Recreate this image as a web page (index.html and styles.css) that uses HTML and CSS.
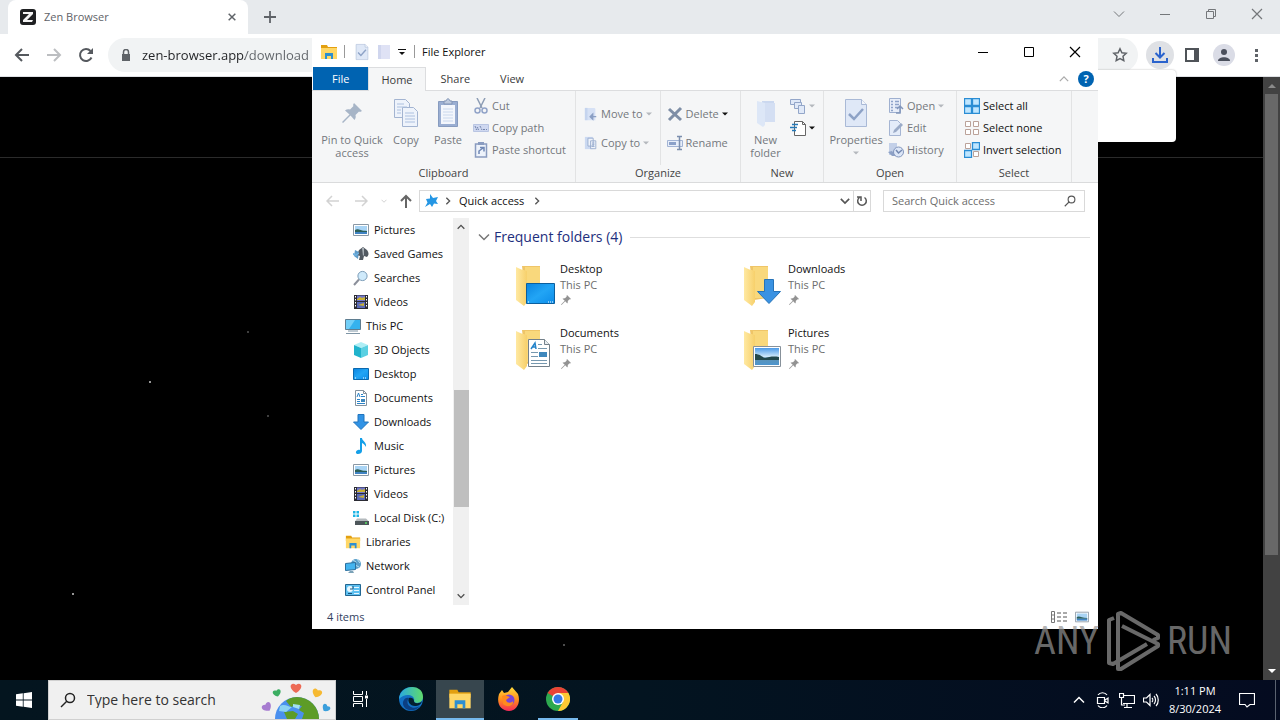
FILE: index.html
```html
<!DOCTYPE html>
<html lang="en">
<head>
<meta charset="utf-8">
<title>Desktop</title>
<link rel="stylesheet" href="styles.css">
</head>
<body>
<svg class="defs" aria-hidden="true">
  <defs>
    <linearGradient id="fold" x1="0" y1="0" x2="1" y2="0"><stop offset="0" stop-color="#ffe9a2"/><stop offset="1" stop-color="#f7d06b"/></linearGradient>
    <linearGradient id="blue" x1="0" y1="0" x2="1" y2="1"><stop offset="0" stop-color="#0a84e0"/><stop offset=".5" stop-color="#22a5f5"/><stop offset="1" stop-color="#0c8ce9"/></linearGradient>
    <linearGradient id="edgeg" x1="0" y1="0" x2="1" y2="0"><stop offset="0" stop-color="#2aa9e0"/><stop offset="1" stop-color="#5fdb6c"/></linearGradient>
    <linearGradient id="foxg" x1="0" y1="0" x2="0" y2="1"><stop offset="0" stop-color="#ffdc3a"/><stop offset=".55" stop-color="#ff8a1e"/><stop offset="1" stop-color="#f5285a"/></linearGradient>
    <linearGradient id="sky" x1="0" y1="0" x2="0" y2="1"><stop offset="0" stop-color="#4b9ae8"/><stop offset=".5" stop-color="#cfe8fa"/><stop offset=".6" stop-color="#5e93b4"/><stop offset="1" stop-color="#4d95cf"/></linearGradient>
  </defs>
  <symbol id="i-arrow-left" viewBox="0 0 16 16"><path d="M15 8H2M8 2L2 8l6 6" fill="none" stroke="currentColor" stroke-width="2"/></symbol>
  <symbol id="i-chev-down" viewBox="0 0 12 12"><path d="M1 3.500l5 5 5-5" fill="none" stroke="currentColor" stroke-width="1.500"/></symbol>
  <symbol id="i-chev-thick" viewBox="0 0 12 12"><path d="M1 3.500l5 5 5-5" fill="none" stroke="currentColor" stroke-width="2"/></symbol>
  <symbol id="i-tri" viewBox="0 0 6 6"><path d="M0 1.500h6l-3 3z" fill="currentColor"/></symbol>
  <symbol id="i-x" viewBox="0 0 12 12"><path d="M1 1l10 10M11 1L1 11" fill="none" stroke="currentColor" stroke-width="1.200"/></symbol>
  <symbol id="i-min" viewBox="0 0 12 12"><path d="M1 6.500h10" stroke="currentColor"/></symbol>
  <symbol id="i-pin" viewBox="0 0 24 24"><path d="M14 2l8 8-2 1-1-.5-3.500 3.500c.5 2 .2 3.500-1 5l-4-4.500L3 22l-1-1 7.500-7.500L5 9.500c1.500-1.200 3-1.500 5-1l3.500-3.500-.5-1z" fill="currentColor"/></symbol>
  <symbol id="i-explorer" viewBox="0 0 18 16"><path d="M1 1h6l1 2h9v4H1z" fill="#e3a010"/><path d="M1 4h16v11H1z" fill="#ffd766"/><path d="M5 15V9h8v6h-2v-3H7v3z" fill="#2d8fd0"/></symbol>
  <symbol id="i-picture" viewBox="0 0 16 16"><path d="M.5 2.500h15v11H.5z" fill="#fff" stroke="#8a98a5"/><path d="M2 4h12v8H2z" fill="#a9d4f5"/><path d="M2 8c3-2 5 1 12 1v1H2z" fill="#2c5f58"/><path d="M2 10h12v2H2z" fill="#3f83c4"/></symbol>
  <symbol id="i-games" viewBox="0 0 16 16"><path d="M2 4l4 2-1 7-4-3z" fill="#5e9bc9"/><path d="M6 4l4-3 4 3c2 3 2 5 0 7l-3-1-1 4H6l1-4-3-1z" fill="#525a62"/><path d="M9 2l1 8 1-1V2z" fill="#a8b0b6"/><path d="M0 7l3 1 3-2v2l-3 2-3-1z" fill="#6fb0df"/></symbol>
  <symbol id="i-search" viewBox="0 0 16 16"><path d="M1 15l5-5.500" stroke="#8b8f9a" stroke-width="2"/><circle cx="9.500" cy="6" r="4.600" fill="#cfeafb" stroke="#7c9db8"/></symbol>
  <symbol id="i-video" viewBox="0 0 16 16"><path d="M1 1h14v14H1z" fill="#2b2b33"/><path d="M4 1.500h8V7H4z" fill="#7177c9"/><path d="M4 8h8v6H4z" fill="#5969b8"/><path d="M4 5l3-2 2 1 3-1v3H4zM5 11l6-2v3z" fill="#c9b233"/><path d="M2.500 2v12M13.500 2v12" stroke="#fff" stroke-dasharray="1.500 1.500"/></symbol>
  <symbol id="i-pc" viewBox="0 0 16 16"><path d="M.5 1.500h15v10H.5z" fill="#35b2ee" stroke="#5f7d90"/><path d="M1 2h9l-6 9H1z" fill="#72cff8"/><path d="M3 13h10M1 15.500h14" stroke="#7f95a5"/></symbol>
  <symbol id="i-cube" viewBox="0 0 16 16"><path d="M8 0l7 3-7 3-7-3z" fill="#aeeef5"/><path d="M1 3l7 3v10l-7-3z" fill="#20b3cc"/><path d="M15 3L8 6v10l7-3z" fill="#5ad0e2"/></symbol>
  <symbol id="i-desktop" viewBox="0 0 16 16"><path d="M.5 2.500h15v11H.5z" fill="url(#blue)" stroke="#0b68ae"/><path d="M2 12h1M10 12h4" stroke="#fff" stroke-dasharray="1 1"/></symbol>
  <symbol id="i-doc" viewBox="0 0 16 16"><path d="M2.500.5h8l3 3v12h-11z" fill="#fff" stroke="#84929e"/><path d="M10.500.5v3h3" fill="none" stroke="#84929e"/><path d="M4 7l1.500-4L7 7M8 4.500h2M8 6.500h4M4 9.500h3M4 11.500h3M4 13.500h8" fill="none" stroke="#2a83c8"/><path d="M8 9h4v3H8z" fill="#3f88bd"/></symbol>
  <symbol id="i-down" viewBox="0 0 16 16"><path d="M5 .5h6V8h4.500L8 15.500.5 8H5z" fill="#3193e5" stroke="#2174bd"/></symbol>
  <symbol id="i-music" viewBox="0 0 16 16"><path d="M7 0h2c0 3 5 4 4 9-1-2-2-3-4-4v8c0 2-2 3-4 3s-3-2-1-3.500c1-1 2-1 3-.5z" fill="#149fe8"/></symbol>
  <symbol id="i-disk" viewBox="0 0 16 16"><path d="M0 1h2.500v2.500H0zM3.500 1H6v2.500H3.500zM0 4.500h2.500V7H0zM3.500 4.500H6V7H3.500z" fill="#1cb4e4"/><path d="M4 8.500h9l3 3H2z" fill="#b4babd"/><path d="M2 11h14v4H2z" fill="#4d565a"/><path d="M12 13h2" stroke="#57e065" stroke-width="1.500"/></symbol>
  <symbol id="i-network" viewBox="0 0 16 16"><circle cx="11" cy="6" r="5" fill="#5a9fca"/><path d="M8 2l3 2-1 3 4 2M12 1l3 4" fill="none" stroke="#b7dff0"/><path d="M.5 5.500l10-1v7l-10 1z" fill="#43b4ef" stroke="#2a6f9e"/><path d="M3 15h6l-1-2H5z" fill="#7ca2b7"/></symbol>
  <symbol id="i-panel" viewBox="0 0 16 16"><path d="M.5 2.500h15v11H.5z" fill="#5cbff0" stroke="#236691"/><circle cx="5" cy="7" r="3" fill="#e9f8ff"/><path d="M5 7h3V4M3 11.500h4" stroke="#18547c" fill="none"/><path d="M9 5.500h5M9 8.500h5M9 11.500h5" stroke="#e6f6ff" fill="none"/></symbol>
  <symbol id="i-folder-big" viewBox="0 0 44 44"><path d="M9 3h18v32l-14 2z" fill="#efc568"/><path d="M12 4h15v31H12z" fill="#f9d87c"/><path d="M3 4c3 2 8 3 11 4v31l-3 4-8-6z" fill="url(#fold)"/></symbol>
  <symbol id="i-check-doc" viewBox="0 0 24 32"><path d="M1.500 2.500h16l5 5v22h-21z" fill="#dfe8f7" stroke="#a9b9d6"/><path d="M17.500 2.500v5h5" fill="#f4f7fc" stroke="#a9b9d6"/><path d="M5 17l5 5 9-10" fill="none" stroke="#8da2c6" stroke-width="2.500"/></symbol>
  <symbol id="i-copy" viewBox="0 0 26 30"><g fill="#eef3fb" stroke="#a3b4d1"><path d="M1.500 1.500h11l4 4v14h-15z"/><path d="M9.500 9.500h11l4 4v15h-15z"/></g><path d="M4 6h7M4 9h10M4 12h4M4 15h4M12 15h9M12 18h10M12 21h10M12 24h10" stroke="#acc0df"/></symbol>
  <symbol id="i-paste" viewBox="0 0 24 30"><path d="M2.500 3.500h19v25h-19z" fill="#9aaed2" stroke="#879bbf"/><path d="M5 7h14v19H5z" fill="#f3f6fc"/><path d="M8 6V3h2c1-3 3-3 4 0h2v3z" fill="#bdc9de" stroke="#8194b5"/><path d="M7 11h10M7 14h10M7 17h10M7 20h10M7 23h10" stroke="#cad8ed"/></symbol>
  <symbol id="i-cut" viewBox="0 0 16 16"><path d="M4 0l5 10M12 0L7 10" stroke="#8d9db5" stroke-width="1.500"/><circle cx="4.500" cy="12.500" r="2.500" fill="none" stroke="#91a3c8" stroke-width="1.500"/><circle cx="11.500" cy="12.500" r="2.500" fill="none" stroke="#91a3c8" stroke-width="1.500"/></symbol>
  <symbol id="i-path" viewBox="0 0 16 16"><path d="M.5 4.500h15v7H.5z" fill="#cfd8f0" stroke="#b9c5e2"/><path d="M2 6l1.500 4 1-3 1 3M7 6l2 4M10 9.500h4" stroke="#7385ad" fill="none" stroke-dasharray="2 1"/></symbol>
  <symbol id="i-shortcut" viewBox="0 0 16 16"><path d="M2.500 2h11v13h-11z" fill="#eef3fb" stroke="#8a9cc0" stroke-width="1.500"/><path d="M5 0h6v3H5z" fill="#8a9cc0"/><path d="M6 12V9l4-3M7 5.500h4v4" stroke="#7088b5" stroke-width="1.500" fill="none"/></symbol>
  <symbol id="i-move" viewBox="0 0 16 16"><path d="M1 1h11l1 1v13H1z" fill="#d6e1f5"/><path d="M1 1h3v14H1z" fill="#c5d4ee"/><path d="M14 11H8M10 8l-3 3 3 3z" stroke="#8b9fc4" stroke-width="1.500" fill="#8b9fc4"/></symbol>
  <symbol id="i-copyto" viewBox="0 0 16 16"><path d="M1 1h9v14H1z" fill="#cbd9f1"/><path d="M4.500 2.500h6v9h-6zM7.500 5.500h6v9h-6z" fill="#eef3fb" stroke="#98abce"/><path d="M9 8h3M9 10h3M9 12h3" stroke="#98abce"/></symbol>
  <symbol id="i-delete" viewBox="0 0 16 16"><path d="M2 3l12 11M14 2L2 14" stroke="#7e8ea6" stroke-width="3"/></symbol>
  <symbol id="i-rename" viewBox="0 0 16 16"><path d="M.5 5.500h15v6H.5z" fill="#e7eefa" stroke="#a2b4d5"/><path d="M2 7h7v3H2z" fill="#8ba1c9"/><path d="M10 1.500h5M12.500 1v14M10 14.500h5" stroke="#7c8fae" stroke-width="1.500"/></symbol>
  <symbol id="i-newfolder" viewBox="0 0 20 30"><path d="M6 3h12v21H6z" fill="#cbd8ef"/><path d="M1 3l8 2v22l-2 2-6-4z" fill="#dde7f7"/><path d="M9 5h10v19H9z" fill="#d4dff3"/></symbol>
  <symbol id="i-newitem" viewBox="0 0 16 16"><g fill="#e0e9f8" stroke="#93a6c9"><path d="M.5 1.500h10v5H.5z"/><path d="M4.500 4.500h7v6h-7z"/><path d="M8.500 7.500h6v8h-6z"/></g></symbol>
  <symbol id="i-easy" viewBox="0 0 16 16"><path d="M4.500 1.500h8l3 3v11h-11z" fill="#fff" stroke="#666"/><path d="M12.500 1.500v3h3" fill="none" stroke="#666"/><path d="M2 4.500h6M0 7.500h7M2 10.500h4" stroke="#2479b8" stroke-width="1.500"/></symbol>
  <symbol id="i-openi" viewBox="0 0 16 16"><path d="M1.500.5h11v14h-11z" fill="#e8eef9" stroke="#9fb0d0"/><path d="M3 3.500h2M3 6.500h2M3 9.500h2M3 12.500h2M7 3.500h4M7 6.500h4M7 9.500h3" stroke="#8fa4ca" stroke-width="1.500"/><path d="M8 15h4V9M9 11l3-3 3 3" stroke="#8296bb" stroke-width="1.500" fill="none"/></symbol>
  <symbol id="i-edit" viewBox="0 0 16 16"><path d="M1.500.5h8l3 3v12h-11z" fill="#e4ecf9" stroke="#a5b5d3"/><path d="M5 13l1-3 7-7 2 2-7 7z" fill="#9babc8"/></symbol>
  <symbol id="i-history" viewBox="0 0 16 16"><path d="M1 1h8v12H1z" fill="#c3d0e8"/><path d="M0 10l4 4h4l-4-5z" fill="#8da1c6"/><circle cx="10.500" cy="10" r="5" fill="#dce6f7" stroke="#8094bb"/><path d="M8 8l2.500 3L14 8" fill="none" stroke="#7388b0" stroke-width="1.500"/></symbol>
  <symbol id="i-selall" viewBox="0 0 16 16"><path d="M.5.5h7v7h-7zM8.500.5h7v7h-7zM.5 8.500h7v7h-7zM8.500 8.500h7v7h-7z" fill="#bfe6ff" stroke="#2a8dd4" stroke-width="1.300"/></symbol>
  <symbol id="i-selnone" viewBox="0 0 16 16"><path d="M1.500 1.500h5v5h-5zM9.500 1.500h5v5h-5zM1.500 9.500h5v5h-5zM9.500 9.500h5v5h-5z" fill="#fff" stroke="#bba299"/></symbol>
  <symbol id="i-selinv" viewBox="0 0 16 16"><path d="M1.500 1.500h5v5h-5zM9.500 9.500h5v5h-5z" fill="#fff" stroke="#bba299"/><path d="M8.500.5h7v7h-7zM.5 8.500h7v7h-7z" fill="#bfe6ff" stroke="#2a8dd4" stroke-width="1.300"/></symbol>
  <symbol id="i-lens" viewBox="0 0 16 16"><circle cx="10" cy="6" r="4.500" fill="none" stroke="currentColor" stroke-width="1.500"/><path d="M7 9l-6 6" stroke="currentColor" stroke-width="1.500"/></symbol>
</svg>

<div class="desktop">
  <main class="browser">
    <header class="tabstrip">
      <div class="tab">
        <svg class="s16" viewBox="0 0 16 16"><rect width="16" height="16" rx="3" fill="#1f2022"/><path d="M3 3h10v2L7 11h6l-1 2H3v-2l6-6H3z" fill="#f4f4f4"/></svg>
        <span class="tab-title">Zen Browser</span>
        <button class="ib s16" aria-label="Close tab"><svg class="s8" viewBox="0 0 12 12"><path d="M1 1l10 10M11 1L1 11" stroke="currentColor" stroke-width="2.200"/></svg></button>
      </div>
      <button class="ib newtab" aria-label="New tab"><svg class="s12" viewBox="0 0 12 12"><path d="M6 0v12M0 6h12" stroke="currentColor" stroke-width="1.800"/></svg></button>
      <div class="chrome-controls">
        <button class="ib" aria-label="Search tabs"><svg class="s12" viewBox="0 0 12 12"><path d="M1 3.500l5 5 5-5" fill="none" stroke="currentColor"/></svg></button>
        <button class="ib" aria-label="Minimize"><svg class="s12"><use href="#i-min"/></svg></button>
        <button class="ib" aria-label="Restore"><svg class="s12" viewBox="0 0 12 12"><path d="M1.500 3.500h7v7h-7zM3.500 3V1.500h7v7H9" fill="none" stroke="currentColor"/></svg></button>
        <button class="ib" aria-label="Close"><svg class="s12"><use href="#i-x"/></svg></button>
      </div>
    </header>
    <div class="toolbar">
      <button class="ib nav" aria-label="Back"><svg class="s16"><use href="#i-arrow-left"/></svg></button>
      <button class="ib nav dim" aria-label="Forward"><svg class="s16 flip"><use href="#i-arrow-left"/></svg></button>
      <button class="ib nav" aria-label="Reload"><svg class="s16" viewBox="0 0 16 16"><path d="M13.500 10.500A6 6 0 1 1 12.500 4" fill="none" stroke="currentColor" stroke-width="2"/><path d="M15 1v6H9z" fill="currentColor"/></svg></button>
      <label class="omnibox">
        <svg class="s12" viewBox="0 0 12 12"><path d="M2 5h8v7H2z" fill="#5f6368"/><path d="M3.500 5V3a2.500 2.500 0 0 1 5 0v2" fill="none" stroke="#5f6368" stroke-width="1.500"/></svg>
        <input class="url" type="text" aria-label="Address" value="zen-browser.app/download">
        <svg class="s16 star" viewBox="0 0 16 16"><path d="M8 1.800l1.900 4 4.300.5-3.200 3 .8 4.300L8 11.500l-3.800 2.100.8-4.300-3.200-3 4.300-.5z" fill="none" stroke="#5f6368" stroke-width="1.500"/></svg>
      </label>
      <button class="ib dl" aria-label="Downloads"><svg class="s16" viewBox="0 0 16 16"><path d="M8 0v10M3.500 6L8 10.500 12.500 6M1 11v4h14v-4" fill="none" stroke="#2a63cd" stroke-width="2"/></svg></button>
      <button class="ib act" aria-label="Side panel"><svg class="s14" viewBox="0 0 14 14"><path d="M1 1h12v12H1z" fill="none" stroke="#4f5358" stroke-width="2"/><path d="M9 1h4v12H9z" fill="#4f5358"/></svg></button>
      <button class="ib act" aria-label="Profile"><svg class="s22" viewBox="0 0 22 22"><circle cx="11" cy="11" r="11" fill="#dadce6"/><circle cx="11" cy="8" r="3" fill="#4a4f5c"/><path d="M5 17c0-5 12-5 12 0z" fill="#4a4f5c"/></svg></button>
      <button class="ib act" aria-label="Menu"><svg class="s14" viewBox="0 0 14 14"><path d="M6 1h3v3H6zM6 6h3v3H6zM6 11h3v3H6z" fill="#5f6368"/></svg></button>
    </div>
    <div class="page">
      <div class="page-body">
        <div class="page-head"></div>
        <svg class="stars" aria-hidden="true"><circle cx="150" cy="305" r="1" fill="#c9c9c9"/><circle cx="73" cy="517" r="1" fill="#c9c9c9"/><circle cx="248" cy="255" r="1" fill="#555"/><circle cx="268" cy="339" r="1" fill="#555"/><circle cx="564" cy="568" r="1" fill="#666"/></svg>
      </div>
      <div class="page-scroll"><svg class="sarrow" viewBox="0 0 8 6"><path d="M0 5h8L4 1z" fill="#8a8a8a"/></svg><div class="page-thumb"></div><svg class="sarrow" viewBox="0 0 8 6"><path d="M0 1h8L4 5z" fill="#fff"/></svg></div>
    </div>
    <div class="popup"></div>
  </main>

  <section class="explorer" aria-label="File Explorer">
    <header class="titlebar">
      <svg class="quick"><use href="#i-explorer"/></svg><i class="bar"></i>
      <svg class="qdoc"><use href="#i-check-doc"/></svg>
      <svg class="qfold" viewBox="0 0 14 16"><path d="M1 1h12v14H1z" fill="#dfe2f5"/><path d="M1 1h3v14H1z" fill="#d0d6ee"/></svg>
      <svg class="s8 ink" viewBox="0 0 8 8"><path d="M0 1.500h8" stroke="currentColor"/><path d="M1 4h6L4 7z" fill="currentColor"/></svg><i class="bar wide"></i>
      <span>File Explorer</span>
      <div class="win-controls">
        <button class="ib" aria-label="Minimize"><svg class="s12"><use href="#i-min"/></svg></button>
        <button class="ib" aria-label="Maximize"><svg class="s12" viewBox="0 0 12 12"><path d="M1.500 1.500h9v9h-9z" fill="none" stroke="currentColor"/></svg></button>
        <button class="ib" aria-label="Close"><svg class="s12"><use href="#i-x"/></svg></button>
      </div>
    </header>
    <nav class="rtabs">
      <button class="rtab file">File</button><button class="rtab on">Home</button><button class="rtab">Share</button><button class="rtab">View</button>
      <div class="rhelp"><svg class="s10 up"><use href="#i-chev-down"/></svg><button class="help" aria-label="Help">?</button></div>
    </nav>
    <div class="ribbon">
      <div class="group g-clip">
        <div class="gbody">
          <button class="big w70"><span class="bicon"><svg class="s24 pinc"><use href="#i-pin"/></svg></span>Pin to Quick access</button>
          <button class="big w38"><span class="bicon"><svg class="s30"><use href="#i-copy"/></svg></span>Copy</button>
          <button class="big w46"><span class="bicon"><svg class="s30"><use href="#i-paste"/></svg></span>Paste</button>
          <div class="smalls">
            <button class="small"><svg class="s16"><use href="#i-cut"/></svg>Cut</button>
            <button class="small"><svg class="s16"><use href="#i-path"/></svg>Copy path</button>
            <button class="small"><svg class="s16"><use href="#i-shortcut"/></svg>Paste shortcut</button>
          </div>
        </div><div class="glabel">Clipboard</div>
      </div>
      <div class="group g-org">
        <div class="gbody">
          <div class="smalls two">
            <button class="small"><svg class="s14"><use href="#i-move"/></svg>Move to<svg class="s6 pale"><use href="#i-tri"/></svg></button>
            <button class="small"><svg class="s14"><use href="#i-copyto"/></svg>Copy to<svg class="s6 pale"><use href="#i-tri"/></svg></button>
          </div>
          <div class="smalls two split">
            <button class="small"><svg class="s16"><use href="#i-delete"/></svg>Delete<svg class="s6 ink"><use href="#i-tri"/></svg></button>
            <button class="small"><svg class="s16"><use href="#i-rename"/></svg>Rename</button>
          </div>
        </div><div class="glabel">Organize</div>
      </div>
      <div class="group g-new">
        <div class="gbody">
          <button class="big w49"><span class="bicon"><svg class="s30"><use href="#i-newfolder"/></svg></span>New folder</button>
          <div class="smalls snug">
            <button class="small" aria-label="New item"><svg class="s16"><use href="#i-newitem"/></svg><svg class="s6 pale"><use href="#i-tri"/></svg></button>
            <button class="small" aria-label="Easy access"><svg class="s16"><use href="#i-easy"/></svg><svg class="s6 ink"><use href="#i-tri"/></svg></button>
          </div>
        </div><div class="glabel">New</div>
      </div>
      <div class="group g-open">
        <div class="gbody">
          <button class="big w64"><span class="bicon"><svg class="s32"><use href="#i-check-doc"/></svg></span>Properties<svg class="s6 pale barrow"><use href="#i-tri"/></svg></button>
          <div class="smalls snug">
            <button class="small"><svg class="s16"><use href="#i-openi"/></svg>Open<svg class="s6 pale"><use href="#i-tri"/></svg></button>
            <button class="small"><svg class="s16"><use href="#i-edit"/></svg>Edit</button>
            <button class="small"><svg class="s16"><use href="#i-history"/></svg>History</button>
          </div>
        </div><div class="glabel">Open</div>
      </div>
      <div class="group g-sel">
        <div class="gbody">
          <div class="smalls snug">
            <button class="small ink"><svg class="s16"><use href="#i-selall"/></svg>Select all</button>
            <button class="small ink"><svg class="s16"><use href="#i-selnone"/></svg>Select none</button>
            <button class="small ink"><svg class="s16"><use href="#i-selinv"/></svg>Invert selection</button>
          </div>
        </div><div class="glabel">Select</div>
      </div>
    </div>
    <div class="address">
      <button class="ib pale2" aria-label="Back"><svg class="s14" viewBox="0 0 14 14"><path d="M13 7H1M6 2L1 7l5 5" fill="none" stroke="currentColor" stroke-width="1.500"/></svg></button>
      <button class="ib pale2" aria-label="Forward"><svg class="s14 flip" viewBox="0 0 14 14"><path d="M13 7H1M6 2L1 7l5 5" fill="none" stroke="currentColor" stroke-width="1.500"/></svg></button>
      <button class="ib pale2 narrow" aria-label="Recent"><svg class="s6"><use href="#i-chev-thick"/></svg></button>
      <button class="ib upb" aria-label="Up"><svg class="s14" viewBox="0 0 14 14"><path d="M7 14V2M2 7l5-5 5 5" fill="none" stroke="currentColor" stroke-width="2"/></svg></button>
      <div class="crumbs">
        <svg class="s14" viewBox="0 0 14 14"><path d="M5 0l3 4 5-1-2 4 2 3-4-.5L7 13l-2-3-5 3 2.500-4.500L1 5l4-.5z" fill="#2496e4"/></svg>
        <svg class="s8 right"><use href="#i-chev-thick"/></svg>
        <button class="crumb">Quick access</button>
        <svg class="s8 right"><use href="#i-chev-thick"/></svg>
        <button class="ib drop" aria-label="Previous locations"><svg class="s10"><use href="#i-chev-thick"/></svg></button>
        <button class="ib refresh" aria-label="Refresh"><svg class="s12" viewBox="0 0 12 12"><path d="M8.500 2.500a4.300 4.300 0 1 1-5 0M1 2h4v4" fill="none" stroke="currentColor" stroke-width="1.500"/></svg></button>
      </div>
      <label class="find"><input type="text" aria-label="Search Quick access" placeholder="Search Quick access"><svg class="s12"><use href="#i-lens"/></svg></label>
    </div>
    <div class="panes">
      <ul class="tree">
        <li class="sub"><svg class="s16"><use href="#i-picture"/></svg>Pictures</li>
        <li class="sub"><svg class="s16"><use href="#i-games"/></svg>Saved Games</li>
        <li class="sub"><svg class="s16"><use href="#i-search"/></svg>Searches</li>
        <li class="sub"><svg class="s16"><use href="#i-video"/></svg>Videos</li>
        <li><svg class="s16"><use href="#i-pc"/></svg>This PC</li>
        <li class="sub"><svg class="s16"><use href="#i-cube"/></svg>3D Objects</li>
        <li class="sub"><svg class="s16"><use href="#i-desktop"/></svg>Desktop</li>
        <li class="sub"><svg class="s16"><use href="#i-doc"/></svg>Documents</li>
        <li class="sub"><svg class="s16"><use href="#i-down"/></svg>Downloads</li>
        <li class="sub"><svg class="s16"><use href="#i-music"/></svg>Music</li>
        <li class="sub"><svg class="s16"><use href="#i-picture"/></svg>Pictures</li>
        <li class="sub"><svg class="s16"><use href="#i-video"/></svg>Videos</li>
        <li class="sub"><svg class="s16"><use href="#i-disk"/></svg>Local Disk (C:)</li>
        <li><svg class="s16"><use href="#i-explorer"/></svg>Libraries</li>
        <li><svg class="s16"><use href="#i-network"/></svg>Network</li>
        <li><svg class="s16"><use href="#i-panel"/></svg>Control Panel</li>
      </ul>
      <div class="tree-scroll"><svg class="s8 up"><use href="#i-chev-thick"/></svg><div class="tree-thumb"></div><svg class="s8"><use href="#i-chev-thick"/></svg></div>
      <div class="files">
        <h2 class="section"><svg class="s12"><use href="#i-chev-down"/></svg>Frequent folders (4)<i class="rule"></i></h2>
        <div class="tiles">
          <div class="tile"><svg class="s44" viewBox="0 0 44 44"><use href="#i-folder-big"/><path d="M13.500 20.500h28v20h-28z" fill="url(#blue)" stroke="#0b5f9e"/><path d="M15 39h2M35 39h6" stroke="#fff" stroke-dasharray="1 1"/></svg><div class="info"><b>Desktop</b><span>This PC</span><svg class="s12"><use href="#i-pin"/></svg></div></div>
          <div class="tile"><svg class="s44" viewBox="0 0 44 44"><use href="#i-folder-big"/><path d="M23.500 16.500h9v12h7L28 40.500 16.500 28.500h7z" fill="#3a92e2" stroke="#2673b8"/></svg><div class="info"><b>Downloads</b><span>This PC</span><svg class="s12"><use href="#i-pin"/></svg></div></div>
          <div class="tile"><svg class="s44" viewBox="0 0 44 44"><use href="#i-folder-big"/><path d="M15.500 12.500h16l5 5v22h-21z" fill="#fff" stroke="#73808a"/><path d="M31.500 12.500v5h5" fill="#e8edf0" stroke="#73808a"/><path d="M18 22l4-6 1 6M19 20h4" fill="none" stroke="#2484ca" stroke-width="1.500"/><path d="M25 17.500h4M25 21.500h9M18 25.500h7M18 29.500h7M18 33.500h16M18 36.500h16" stroke="#7698af"/><path d="M26 25h8v5h-8z" fill="#3f88bd"/></svg><div class="info"><b>Documents</b><span>This PC</span><svg class="s12"><use href="#i-pin"/></svg></div></div>
          <div class="tile"><svg class="s44" viewBox="0 0 44 44"><use href="#i-folder-big"/><path d="M12.500 19.500h27v20h-27z" fill="#fff" stroke="#87919a"/><path d="M14 21h24v17H14z" fill="url(#sky)"/><path d="M14 27c5 0 7 3 10 4 4-1 8-2 14-1v3H14z" fill="#23484c"/></svg><div class="info"><b>Pictures</b><span>This PC</span><svg class="s12"><use href="#i-pin"/></svg></div></div>
        </div>
      </div>
    </div>
    <footer class="status"><span>4 items</span>
      <div class="views">
        <button class="ib" aria-label="Details"><svg class="v1" viewBox="0 0 16 12"><path d="M.5.5h3v11h-3zM.5 4h3M.5 8h3" fill="none" stroke="#777"/><path d="M6 2h4M12 2h4M6 6h4M12 6h4M6 10h4M12 10h4" stroke="#555"/></svg></button>
        <button class="ib" aria-label="Large icons"><svg class="s14"><use href="#i-picture"/></svg></button>
      </div>
    </footer>
  </section>

  <div class="watermark"><span>ANY</span><svg class="wm" viewBox="0 0 56 64"><g fill="none" stroke="currentColor" stroke-width="4" stroke-linejoin="round"><path d="M9 9l-5 2v43l4 1 34-20M13 56V5l3-1 37 22v3l-5 2M17 17l36 18v2L16 60h-3v-4"/></g></svg><span>RUN</span></div>

  <footer class="taskbar">
    <button class="ib start" aria-label="Start"><svg class="s16" viewBox="0 0 16 16"><path d="M0 2.300L6.800 1.300v6.300H0zM7.600 1.200L16 0v7.600H7.600zM0 8.400h6.800v6.300L0 13.700zM7.600 8.400H16V16l-8.400-1.200z" fill="#fff"/></svg></button>
    <label class="search"><svg class="s16"><use href="#i-lens"/></svg><input type="text" aria-label="Type here to search" placeholder="Type here to search">
      <svg class="earth" viewBox="0 0 72 38"><defs><clipPath id="globe"><circle cx="37" cy="38" r="22"/></clipPath><path id="heart" d="M0 5C-9 0-5-7 0-3 5-7 9 0 0 5z"/></defs><circle cx="37" cy="38" r="22" fill="#4a90ee"/><g clip-path="url(#globe)"><path d="M26 20c8-8 24-6 32 6l2 12H42l2-6-5-3 3-4-6-1-5 2z" fill="#5d9c27"/><path d="M24 31l9-1 5 3-3 5h-8z" fill="#5d9c27"/><path d="M20 25c5-3 8 1 12 1l-6 5-7-1z" fill="#8bd3f3"/><path d="M33 23l7 1-1 4-6-2z" fill="#a3e1ef"/></g><g><use href="#heart" transform="translate(36 7)" fill="#ed6a55"/><use href="#heart" transform="translate(17 12) rotate(-15) scale(.75)" fill="#3cae62"/><use href="#heart" transform="translate(57 12) rotate(20) scale(.9)" fill="#f6b931"/><use href="#heart" transform="translate(7 26) rotate(-35) scale(.9)" fill="#a77cd0"/><use href="#heart" transform="translate(66 27) rotate(35) scale(.75)" fill="#3b9fdc"/></g></svg></label>
    <button class="ib app taskview" aria-label="Task view"><svg class="s18" viewBox="0 0 18 18"><path d="M2.500 1v3.500h9V1M2.500 17v-3.500h9V17M2.500 6.500h9v5h-9zM15.500 1v4M15.500 9v8" fill="none" stroke="#fff"/><path d="M14 5.500h3v3h-3z" fill="#fff"/></svg></button>
    <button class="ib app" aria-label="Edge"><svg class="s24" viewBox="0 0 24 24"><circle cx="12" cy="12" r="12" fill="#1270c4"/><path d="M0 12C1-3 24-4 24 10c0 7-9 7-9 4 2-6-9-9-15-2z" fill="url(#edgeg)"/><path d="M10 11c-5 6 3 13 11 8-5 7-18 5-17-4 1-4 4-5 6-4z" fill="#0b3f83"/><path d="M10 11c3-1 5 1 5 3 0 3 6 3 8 0-1 4-4 5-7 5-5 0-8-5-6-8z" fill="#04202f"/></svg></button>
    <button class="ib app current" aria-label="File Explorer"><svg class="s24"><use href="#i-explorer"/></svg></button>
    <button class="ib app" aria-label="Firefox"><svg class="s24" viewBox="0 0 24 24"><path d="M2 7l3-4 2 3 4-1 4-5 6 7c3 8-1 17-9 17S-1 17 2 7z" fill="url(#foxg)"/><circle cx="12" cy="13" r="5.500" fill="#7945d8"/><path d="M5 9c3-2 5 0 8 1l-4 3c1 4 6 3 7 1 1 5-6 7-10 3z" fill="#ff8a1e"/></svg></button>
    <button class="ib app running" aria-label="Chrome"><svg class="s24" viewBox="0 0 24 24"><circle cx="12" cy="12" r="12" fill="#2da94f"/><path d="M12 12L1.600 6a12 12 0 0 1 20.800 0z" fill="#ea4335"/><path d="M12 6h10.400A12 12 0 0 1 12 24l5-9z" fill="#fcc934"/><circle cx="12" cy="12" r="6" fill="#fff"/><circle cx="12" cy="12" r="4.500" fill="#3579e6"/></svg></button>
    <div class="tray">
      <button class="ib" aria-label="Hidden icons"><svg class="s12 up"><use href="#i-chev-down"/></svg></button>
      <button class="ib" aria-label="Meet now"><svg class="s16" viewBox="0 0 16 16"><path d="M2.500 5.500h7v6h-7zM10 8l3-2v5l-3-2M3 3c2-3 7-3 9 0M3 13.500c2 3 7 3 9 0" fill="none" stroke="#fff" stroke-width="1.200"/></svg></button>
      <button class="ib" aria-label="Network"><svg class="s16" viewBox="0 0 16 16"><path d="M4 3.500h11.500v8H4M8 12v3M5 15.500h8M.5 1.500h4v4h-4zM2.500 6v7H6" fill="none" stroke="#fff" stroke-width="1.200"/></svg></button>
      <button class="ib" aria-label="Volume"><svg class="s16" viewBox="0 0 16 16"><path d="M.5 6h3L7 2.500v11L3.500 10h-3zM9 6c1 1 1 3 0 4M11 4c2 2 2 6 0 8M13 2c3 3 3 9 0 12" fill="none" stroke="#fff" stroke-width="1.200"/></svg></button>
      <button class="clock">1:11 PM<br>8/30/2024</button>
      <button class="ib notif" aria-label="Notifications"><svg class="s16" viewBox="0 0 16 16"><path d="M.5 1.500h15v11H11L8 15l-2-2.500H.5z" fill="none" stroke="#fff" stroke-width="1.200"/></svg></button>
      <i class="peek"></i>
    </div>
  </footer>
</div>
</body>
</html>
```
FILE: styles.css
```css
* { box-sizing: border-box; }
body { margin: 0; font: 11px/16px "Open Sans", "Noto Sans", sans-serif; color: #111; }
button, input { font: inherit; color: inherit; background: none; border: 0; padding: 0; margin: 0; outline: 0; }
input { min-width: 0; }
svg { flex: none; display: block; }
.defs { position: absolute; width: 0; height: 0; }
.desktop { height: 100vh; display: flex; flex-direction: column; overflow: hidden; position: relative; background: #000; }

.s6 { width: 6px; height: 6px; }
.s8 { width: 8px; height: 8px; }
.s10 { width: 10px; height: 10px; }
.s12 { width: 12px; height: 12px; }
.s14 { width: 14px; height: 14px; }
.s16 { width: 16px; height: 16px; }
.s18 { width: 18px; height: 18px; }
.s22 { width: 22px; height: 22px; }
.s24 { width: 24px; height: 24px; }
.s30 { width: 30px; height: 30px; }
.s32 { width: 32px; height: 32px; }
.s44 { width: 44px; height: 44px; }
.flip { transform: scaleX(-1); }
.up { transform: rotate(180deg); }
.right { transform: rotate(-90deg); color: #555; }
.ink { color: #111; }
.pale { color: #b4b8bd; }
.ib { display: flex; align-items: center; justify-content: center; flex: none; }

/* Browser window */
.browser { flex: 1; min-height: 0; display: flex; flex-direction: column; position: relative; }
.tabstrip { height: 34px; background: #e7eaed; display: flex; padding-left: 8px; color: #5f6368; }
.tab { width: 240px; background: #fff; border-radius: 8px 8px 0 0; display: flex; align-items: center; gap: 8px; padding: 0 8px 0 12px; }
.tab-title { flex: 1; }
.newtab { width: 44px; }
.chrome-controls { margin-left: auto; display: flex; padding-bottom: 6px; }
.chrome-controls .ib { width: 46px; color: #74777a; }
.toolbar { height: 43px; background: #fff; border-bottom: 1px solid #dfe1e5; display: flex; align-items: center; padding: 0 8px 0 6px; }
.nav { width: 32px; color: #55595e; }
.nav.dim { color: #bcbec1; }
.omnibox { flex: 1; height: 34px; margin: 0 8px 0 6px; border-radius: 17px; background: #f1f3f4; display: flex; align-items: center; gap: 10px; padding: 0 10px 0 12px; }
.url { flex: 1; font-size: 13px; color: transparent; background: linear-gradient(90deg, #202124 103px, #5f6368 103px); -webkit-background-clip: text; background-clip: text; }
.dl { width: 28px; height: 28px; border-radius: 50%; background: #dfe1e5; margin-right: 2px; }
.act { width: 32px; }
.page { flex: 1; min-height: 0; display: flex; background: #000; }
.page-body { flex: 1; position: relative; }
.page-head { height: 81px; border-bottom: 1px solid #2b2b2b; }
.stars { position: absolute; inset: 0; width: 100%; height: 100%; }
.page-scroll { width: 17px; background: #424242; display: flex; flex-direction: column; align-items: center; padding: 6px 2px; }
.page-thumb { flex: 0 0 78%; width: 100%; margin: 5px 0 auto; background: #686868; }
.sarrow { width: 8px; height: 6px; }
.popup { position: absolute; right: 104px; top: 70px; width: 220px; height: 72px; background: #fff; border-radius: 4px; box-shadow: 0 0 2px rgba(0, 0, 0, .3); }

/* File Explorer window */
.explorer { position: absolute; left: 312px; right: 182px; top: 38px; bottom: 91px; background: #fff; display: flex; flex-direction: column; }
.titlebar { height: 29px; display: flex; align-items: center; padding: 0 0 2px 8px; }
.quick { width: 18px; height: 16px; }
.bar { width: 1px; height: 13px; background: #999; margin: 0 8px 0 6px; }
.bar.wide { margin: 0 7px 0 8px; }
.qdoc { width: 18px; height: 18px; }
.qfold { width: 14px; height: 16px; margin: 0 7px 0 6px; }
.win-controls { margin-left: auto; display: flex; color: #000; }
.win-controls .ib { width: 46px; height: 27px; }
.rtabs { height: 24px; display: flex; border-bottom: 1px solid #dcdddf; padding-left: 1px; }
.rtab { padding: 0 14px; color: #3b3b3b; border: 1px solid transparent; border-bottom: 0; height: 23px; }
.rtab.file { background: #0063b1; color: #fff; padding: 0 18px; }
.rtab.on { background: #f5f6f7; border-color: #dcdddf; height: 24px; padding: 0 12px; }
.rhelp { margin-left: auto; display: flex; align-items: center; gap: 9px; padding-right: 4px; color: #aaa; }
.help { width: 16px; height: 16px; border-radius: 50%; background: #0063b1; color: #fff; font-weight: 700; line-height: 16px; }
.ribbon { height: 92px; background: #f5f6f7; border-bottom: 1px solid #dadbdc; display: flex; color: #74787d; }
.group { display: flex; flex-direction: column; border-right: 1px solid #e2e3e4; }
.g-clip { width: 264px; }
.g-org { width: 165px; }
.g-new { width: 83px; }
.g-open { width: 133px; }
.g-sel { width: 115px; }
.gbody { flex: 1; display: flex; padding-left: 5px; }
.g-sel .gbody { padding-left: 7px; }
.g-org .gbody { padding-left: 6px; }
.g-new .gbody, .g-open .gbody { padding-left: 0; }
.glabel { text-align: center; color: #444; height: 17px; }
.big { display: flex; flex-direction: column; align-items: center; padding-top: 6px; line-height: 13px; flex: none; }
.bicon { height: 32px; display: flex; align-items: center; margin-bottom: 4px; }
.pinc { color: #a7b5c7; }
.w70 { width: 70px; }
.w38 { width: 38px; }
.w46 { width: 46px; }
.w49 { width: 49px; padding-left: 6px; padding-right: 6px; }
.w64 { width: 64px; }
.barrow { margin-top: 4px; }
.smalls { display: flex; flex-direction: column; padding: 4px 0 0 2px; }
.smalls.snug { padding-left: 0; }
.small { display: flex; align-items: center; gap: 3px; height: 22px; white-space: nowrap; }
.smalls.two { padding-top: 8px; }
.two .small { height: 29px; }
.smalls.split { border-left: 1px solid #e2e3e4; margin-left: 8px; padding-left: 6px; }
.address { height: 35px; display: flex; align-items: center; padding: 0 13px 0 7px; color: #555; }
.address > .ib { width: 28px; }
.address > .pale2 { color: #d2d2d2; }
.address > .narrow { width: 18px; }
.address > .upb { width: 26px; color: #666; }
.crumbs { flex: 1; height: 22px; border: 1px solid #d9d9d9; display: flex; align-items: center; padding-left: 5px; gap: 5px; }
.crumb { color: #111; margin: 0 4px 0 2px; }
.drop { margin-left: auto; width: 6px; }
.refresh { width: 17px; height: 20px; border-left: 1px solid #d9d9d9; }
.find { width: 202px; height: 22px; border: 1px solid #d9d9d9; margin-left: 12px; display: flex; align-items: center; padding: 0 8px; }
.find input { flex: 1; }
.find input::placeholder { color: #6d6d6d; opacity: 1; }
.panes { flex: 1; min-height: 0; display: flex; }
.tree { width: 141px; margin: 0; padding: 0; list-style: none; overflow: hidden; }
.tree li { height: 24px; display: flex; align-items: center; gap: 5px; padding-left: 33px; white-space: nowrap; }
.tree .sub { padding-left: 41px; }
.tree-scroll { width: 16px; background: #f0f0f0; display: flex; flex-direction: column; align-items: center; padding: 5px 0; color: #505050; }
.tree-thumb { width: 15px; height: 31%; margin: 159px 0 auto; background: #bfbfbf; }
.files { flex: 1; padding: 3px 8px 0 9px; }
.section { margin: 0; height: 32px; display: flex; align-items: center; gap: 4px; font-size: 14px; font-weight: 400; color: #1e2f7d; }
.section svg { color: #777; }
.rule { flex: 1; height: 1px; background: #dedede; margin-left: 4px; }
.tiles { display: grid; grid-template-columns: 228px 228px; padding-left: 35px; }
.tile { height: 64px; display: flex; gap: 3px; padding-top: 8px; }
.tile > svg { margin-top: 2px; }
.info { display: flex; flex-direction: column; color: #6d6d6d; }
.info b { font-weight: 400; color: #111; }
.info svg { color: #929292; margin-top: 1px; }
.status { height: 24px; display: flex; align-items: center; justify-content: space-between; padding: 0 9px 0 15px; color: #33415f; }
.views { display: flex; gap: 8px; }
.v1 { width: 16px; height: 12px; }

.watermark { position: absolute; right: 48px; bottom: 47px; display: flex; align-items: center; gap: 6px; color: rgba(150, 150, 150, .7); font: 38px/64px "Roboto Condensed", "Liberation Sans Narrow", "Liberation Sans", sans-serif; }
.wm { width: 56px; height: 64px; }

/* Taskbar */
.taskbar { height: 40px; display: flex; background: linear-gradient(90deg, #04151f, #031420 50%, #040b20); color: #fff; }
.start { width: 48px; }
.search { width: 288px; background: #f0f0f0; border: 1px solid #d0d0d0; color: #222; display: flex; align-items: center; padding-left: 11px; gap: 11px; }
.search input { flex: 1; font-size: 14px; }
.search input::placeholder { color: #333; opacity: 1; }
.earth { width: 72px; height: 38px; margin-right: 3px; }
.app { width: 48px; border-bottom: 2px solid transparent; margin-right: 1px; }
.taskview { margin-right: 3px; }
.current { background: #37464e; border-color: #76b9ed; }
.running { background: linear-gradient(#76b9ed, #76b9ed) 4px 100% / 40px 2px no-repeat border-box; }
.tray { margin-left: auto; display: flex; align-items: center; }
.tray .ib { width: 24px; }
.clock { width: 64px; line-height: 18px; text-align: center; }
.tray .notif { width: 40px; }
.peek { width: 1px; height: 40px; background: #5a6270; margin: 0 4px 0 8px; }
```
